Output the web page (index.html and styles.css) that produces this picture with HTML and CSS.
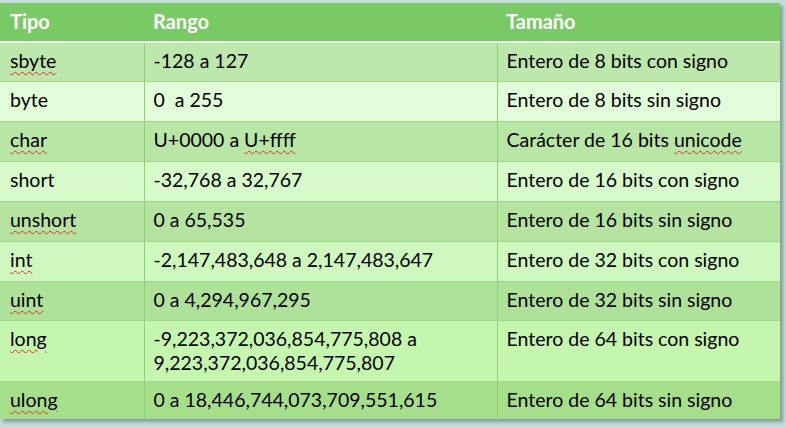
FILE: index.html
```html
<!DOCTYPE html>
<html lang="es">
<head>
<meta charset="utf-8">
<title>Tipos enteros</title>
<link rel="stylesheet" href="styles.css">
</head>
<body>
<div class="page">
  <table class="types">
    <colgroup>
      <col class="c1"><col class="c2"><col class="c3">
    </colgroup>
    <thead>
      <tr class="head"><th>Tipo</th><th>Rango</th><th>Tamaño</th></tr>
    </thead>
    <tbody>
      <tr class="r1"><td><span class="sp">sbyte</span></td><td>-128 a 127</td><td>Entero de 8 bits con signo</td></tr>
      <tr class="r2"><td>byte</td><td>0&nbsp; a 255</td><td>Entero de 8 bits sin signo</td></tr>
      <tr class="r3"><td><span class="sp">char</span></td><td>U+0000 a <span class="sp">U+ffff</span></td><td>Carácter de 16 bits <span class="sp">unicode</span></td></tr>
      <tr class="r4"><td>short</td><td>-32,768 a 32,767</td><td>Entero de 16 bits con signo</td></tr>
      <tr class="r5"><td><span class="sp">unshort</span></td><td>0 a 65,535</td><td>Entero de 16 bits sin signo</td></tr>
      <tr class="r6"><td><span class="sp">int</span></td><td>-2,147,483,648 a 2,147,483,647</td><td>Entero de 32 bits con signo</td></tr>
      <tr class="r7"><td><span class="sp">uint</span></td><td>0 a 4,294,967,295</td><td>Entero de 32 bits sin signo</td></tr>
      <tr class="r8 tall"><td><span class="sp">long</span></td><td>-9,223,372,036,854,775,808 a<br>9,223,372,036,854,775,807</td><td>Entero de 64 bits con signo</td></tr>
      <tr class="r9"><td><span class="sp">ulong</span></td><td>0 a 18,446,744,073,709,551,615</td><td>Entero de 64 bits sin signo</td></tr>
    </tbody>
  </table>
</div>
</body>
</html>
```

FILE: styles.css
```css
html, body {
  margin: 0;
  padding: 0;
  background: #c4dcda;
}
.page {
  padding-top: 3px;
  width: 786px;
  height: 425px;
}
.types {
  border-collapse: collapse;
  width: 780px;
  table-layout: fixed;
  font-family: Lato, "Open Sans", sans-serif;
  font-size: 19.5px;
  color: #000;
  box-shadow: 3px 3px 3px rgba(80, 110, 100, 0.55);
}
.c1 { width: 144px; }
.c2 { width: 353px; }
.c3 { width: 283px; }
.head th {
  background: #79c964;
  color: #fff;
  font-weight: bold;
  font-size: 20px;
  text-align: left;
  height: 39px;
  padding: 0 0 2px 10px;
  border-bottom: 2px solid #f2fbef;
  box-sizing: border-box;
}
.head th + th { padding-left: 9px; }
td {
  height: 40px;
  box-sizing: border-box;
  padding: 6px 0 0 10px;
  vertical-align: top;
  line-height: 24px;
  border-bottom: 1px solid #9fd68a;
}
td + td {
  padding-left: 9px;
  border-left: 1px solid #8fcf78;
}
.tall td { height: 61px; }
.r1 td { background: #bde8ab; height: 39px; }
.r2 td { background: #e0fcd8; }
.r3 td { background: #b8e6a5; }
.r4 td { background: #d6fac9; }
.r5 td { background: #b4e49f; }
.r6 td { background: #cef8be; }
.r7 td { background: #aee298; height: 39px; }
.r8 td { background: #c4f6ae; }
.r9 td { background: #a6df8a; height: 38px; border-bottom: none; }
.sp {
  text-decoration: underline wavy #e03020;
  text-decoration-thickness: 1px;
  text-underline-offset: 3px;
}
```
